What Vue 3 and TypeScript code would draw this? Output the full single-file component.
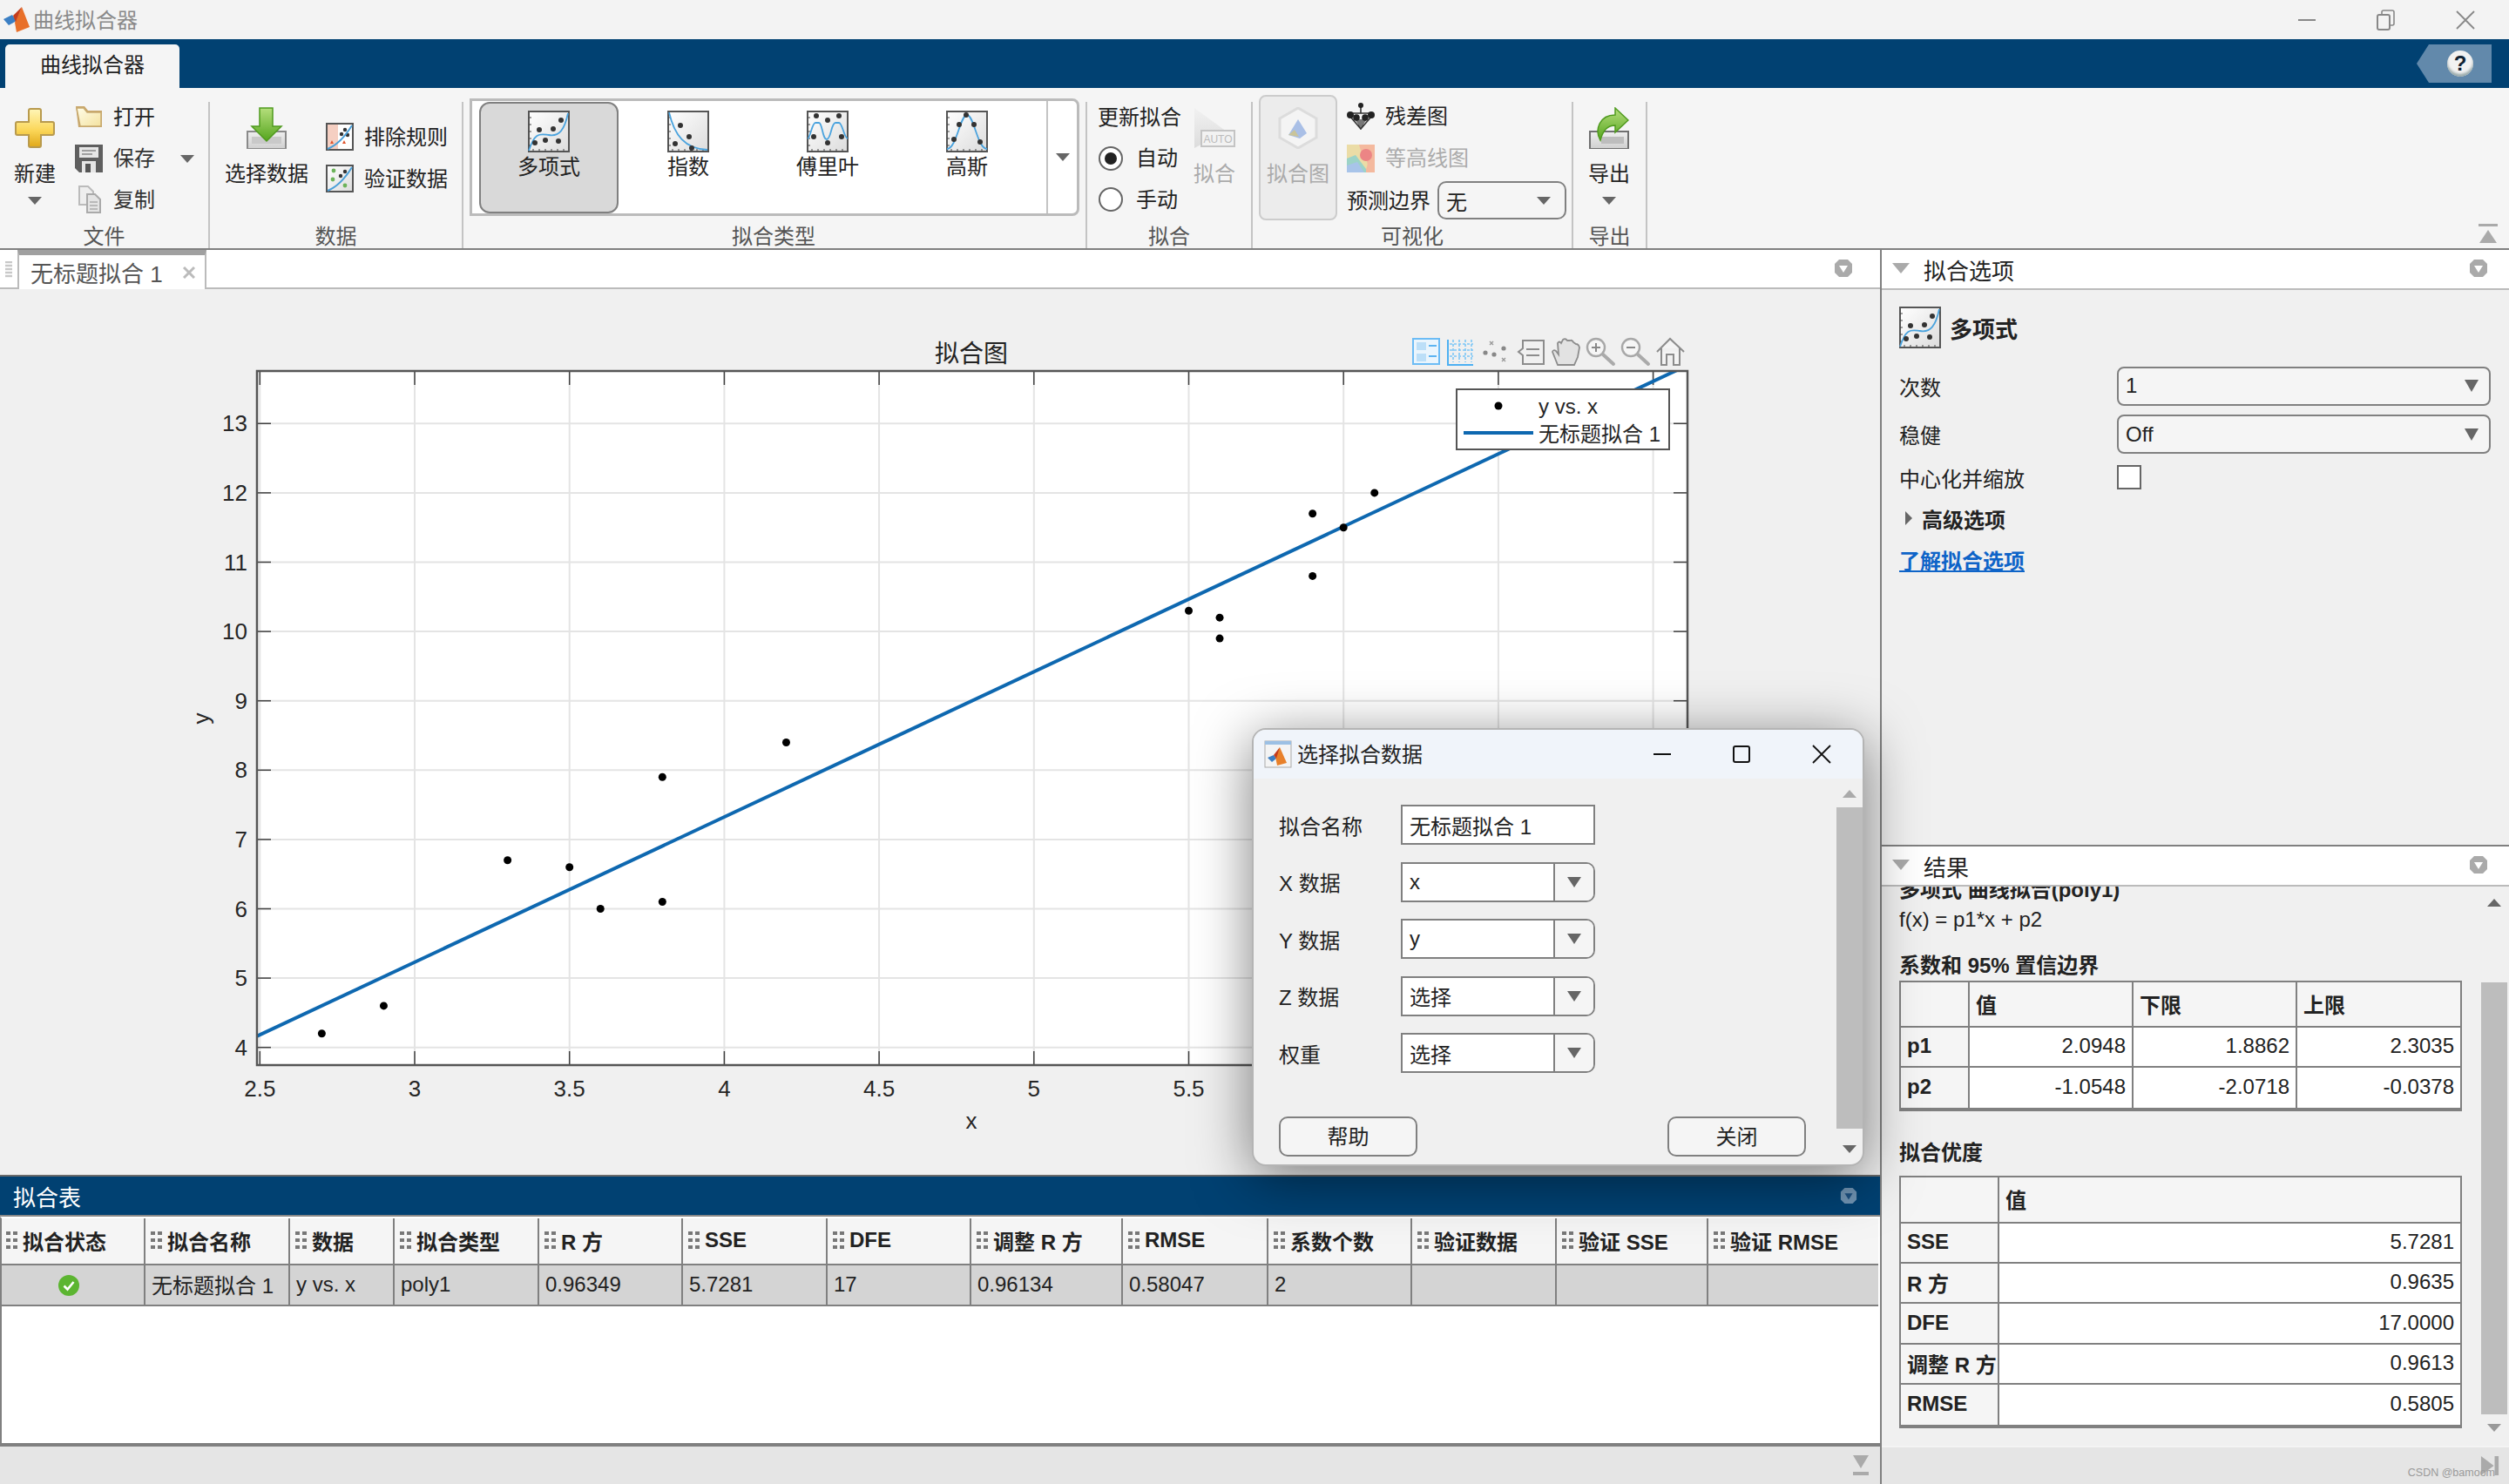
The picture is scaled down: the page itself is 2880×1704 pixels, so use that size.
<script setup lang="ts">
const X = (v: number) => 298.3 + (v - 2.5) * 355.4
const Y = (v: number) => 1202.7 - (v - 4) * 79.6

const xTicks = [2.5, 3, 3.5, 4, 4.5, 5, 5.5, 6, 6.5, 7]
const yTicks = [4, 5, 6, 7, 8, 9, 10, 11, 12, 13]
const points = [
  [2.7, 4.2], [2.9, 4.6], [3.3, 6.7], [3.5, 6.6], [3.6, 6.0], [3.8, 7.9], [3.8, 6.1], [4.2, 8.4],
  [5.5, 10.3], [5.6, 10.2], [5.6, 9.9], [5.9, 11.7], [5.9, 10.8], [6.0, 11.5], [6.1, 12.0]
]
const fit = (x: number) => 2.0948 * x - 1.0548

type Dot = [number, number]
const gallery: { label: string; curve: string; dots: Dot[] }[] = [
  { label: '多项式', curve: 'M1,46 C8,24 14,27 24,28 C36,30 42,22 46,3', dots: [[38, 11], [29, 21], [13, 22], [35, 35], [20, 34], [8, 37]] },
  { label: '指数', curve: 'M2,2 C8,28 20,44 46,45', dots: [[15, 17], [25, 30], [9, 38], [28, 43]] },
  { label: '傅里叶', curve: 'M1,32 C4,32 6,14 10,14 L14,14 C18,14 18,33 23,33 C28,33 28,14 33,14 L37,14 C41,14 43,32 47,32', dots: [[11, 6], [24, 11], [37, 6], [8, 30], [24, 37], [40, 30]] },
  { label: '高斯', curve: 'M1,44 C12,44 16,5 24,5 C32,5 36,44 47,44', dots: [[23, 5], [15, 16], [32, 16], [9, 33], [39, 36]] }
]

const columns = ['拟合状态', '拟合名称', '数据', '拟合类型', 'R 方', 'SSE', 'DFE', '调整 R 方', 'RMSE', '系数个数', '验证数据', '验证 SSE', '验证 RMSE']
const rowValues = ['', '无标题拟合 1', 'y vs. x', 'poly1', '0.96349', '5.7281', '17', '0.96134', '0.58047', '2', '', '', '']
const gripDots: Dot[] = [[0, 0], [8, 0], [0, 8], [8, 8], [0, 16], [8, 16]]

const coef = [
  { n: 'p1', v: ['2.0948', '1.8862', '2.3035'] },
  { n: 'p2', v: ['-1.0548', '-2.0718', '-0.0378'] }
]
const gof = [
  ['SSE', '5.7281'], ['R 方', '0.9635'], ['DFE', '17.0000'], ['调整 R 方', '0.9613'], ['RMSE', '0.5805']
]
const dlgRows = [
  ['X 数据', 'x'], ['Y 数据', 'y'], ['Z 数据', '选择'], ['权重', '选择']
]
</script>

<template>
  <div class="app">
    <svg class="defs" width="0" height="0">
      <defs>
        <linearGradient id="gIcon" x1="0" y1="0" x2="1" y2="1"><stop offset="0" stop-color="#ffffff" /><stop offset="1" stop-color="#dcdcdc" /></linearGradient>
        <linearGradient id="gPlus" x1="0" y1="0" x2="0" y2="1"><stop offset="0" stop-color="#fff6b8" /><stop offset=".55" stop-color="#fbd75a" /><stop offset="1" stop-color="#e0a818" /></linearGradient>
        <linearGradient id="gFolder" x1="0" y1="0" x2="1" y2="1"><stop offset="0" stop-color="#fffde8" /><stop offset="1" stop-color="#f4e2a0" /></linearGradient>
        <linearGradient id="gGreen" x1="0" y1="0" x2="0" y2="1"><stop offset="0" stop-color="#b5de7c" /><stop offset="1" stop-color="#55a51e" /></linearGradient>
        <linearGradient id="gTray" x1="0" y1="0" x2="0" y2="1"><stop offset="0" stop-color="#efefef" /><stop offset="1" stop-color="#cfcfcf" /></linearGradient>
        <linearGradient id="gBtn" x1="0" y1="0" x2="0" y2="1"><stop offset="0" stop-color="#f0f0f0" /><stop offset="1" stop-color="#d6d6d6" /></linearGradient>
      </defs>
    </svg>

    <header class="titlebar">
      <svg class="logo" width="32" height="32" viewBox="0 0 32 32">
        <polygon points="2,15 12,10 17,17 8,22" fill="#3b7fc4" />
        <polygon points="23,1 32,24 17,30 15,19" fill="#e8702a" />
        <polygon points="23,1 13,11 16,18" fill="#c43c1c" />
      </svg>
      <span class="apptitle">曲线拟合器</span>
      <div class="winctl">
        <svg width="22" height="22" viewBox="0 0 22 22"><path d="M1,11 H21" stroke="#888" stroke-width="2" /></svg>
        <svg width="22" height="24" viewBox="0 0 22 24"><rect x="1" y="6" width="14" height="17" rx="2" fill="none" stroke="#888" stroke-width="2" /><path d="M6,6 V3 Q6,1 8,1 H18 Q20,1 20,3 V16 Q20,18 18,18 H15" fill="none" stroke="#888" stroke-width="1.6" /></svg>
        <svg width="22" height="22" viewBox="0 0 22 22"><path d="M1,1 L21,21 M21,1 L1,21" stroke="#888" stroke-width="1.8" /></svg>
      </div>
    </header>

    <div class="tabstrip">
      <div class="maintab">曲线拟合器</div>
      <div class="helptag">
        <span class="helpball">?</span>
      </div>
    </div>

    <div class="ribbon">
      <section class="group g-file">
        <div class="gbody">
          <div class="lg w80">
            <svg class="lgicon plusicon" width="46" height="48" viewBox="0 0 46 48">
              <path d="M16,3 Q16,1 18,1 H28 Q30,1 30,3 V16 H43 Q45,16 45,18 V29 Q45,31 43,31 H30 V43 Q30,45 28,45 H18 Q16,45 16,43 V31 H3 Q1,31 1,29 V18 Q1,16 3,16 H16 Z" fill="url(#gPlus)" stroke="#b89a4e" stroke-width="2" />
            </svg>
            <span class="lglabel">新建</span>
            <i class="tri lgtri"></i>
          </div>
          <div class="smalls ml6 w118">
            <div class="small">
              <svg width="32" height="28" viewBox="0 0 32 28"><path d="M1,2 H11 L15,7 H31 V26 H4 Z" fill="#c9a66a" /><path d="M2,4 H10 L14,9 H30 V25 H6 Z" fill="url(#gFolder)" stroke="#c8aa70" stroke-width="1.5" /></svg>
              <span>打开</span>
            </div>
            <div class="small">
              <svg width="32" height="32" viewBox="0 0 32 32"><path d="M0,0 H32 V32 H5 L0,27 Z" fill="#5f5f5f" /><rect x="5" y="3" width="22" height="12" fill="#e6e6e6" /><path d="M8,7 H24 M8,11 H20" stroke="#888" stroke-width="1.5" /><rect x="8" y="19" width="16" height="13" fill="#e6e6e6" /><rect x="12" y="22" width="6" height="10" fill="#555" /></svg>
              <span class="midgray">保存</span>
            </div>
            <div class="small">
              <svg width="32" height="32" viewBox="0 0 32 32"><path d="M5,1 H15 L21,7 V22 H5 Z" fill="#eee" stroke="#bbb" stroke-width="2" /><path d="M14,10 H23 L29,16 V31 H14 Z" fill="#e4e4e4" stroke="#aaa" stroke-width="2" /><path d="M17,19 H26 M17,23 H26 M17,27 H26" stroke="#aaa" stroke-width="1.5" /></svg>
              <span class="midgray">复制</span>
            </div>
          </div>
          <i class="tri filetri"></i>
        </div>
        <div class="glabel">文件</div>
      </section>

      <section class="group g-data">
        <div class="gbody">
          <div class="lg w96">
            <svg class="lgicon" width="46" height="48" viewBox="0 0 46 48">
              <rect x="1" y="28" width="44" height="20" fill="url(#gTray)" stroke="#8a8a8a" stroke-width="2" />
              <rect x="6" y="34" width="34" height="8" fill="#c9c9c9" />
              <path d="M15,1 H30 V22 H40 L23,39 L6,22 H15 Z" fill="url(#gGreen)" stroke="#4f9a1e" stroke-width="1.5" />
            </svg>
            <span class="lglabel">选择数据</span>
          </div>
          <div class="smalls ml20 pt24">
            <div class="small">
              <svg width="32" height="32" viewBox="0 0 32 32"><rect x="1" y="1" width="30" height="30" fill="#f5cfc2" stroke="#555" stroke-width="2" /><rect x="14" y="2" width="16" height="28" fill="#fff" /><circle cx="22" cy="8" r="2.2" fill="#333" /><circle cx="18" cy="13" r="2.2" fill="#333" /><circle cx="25" cy="14" r="2.2" fill="#333" /><path d="M7,20 l2,4 -4,0 z M21,20 l2,4 -4,0 z" fill="#e0532c" /><path d="M2,30 C12,26 22,16 30,3" stroke="#4a9fd8" stroke-width="2" fill="none" /></svg>
              <span>排除规则</span>
            </div>
            <div class="small">
              <svg width="32" height="32" viewBox="0 0 32 32"><rect x="1" y="1" width="30" height="30" fill="url(#gIcon)" stroke="#555" stroke-width="2" /><circle cx="9" cy="7" r="2.4" fill="#6cb35a" /><circle cx="22" cy="8" r="2.2" fill="#333" /><circle cx="17" cy="13" r="2.2" fill="#333" /><circle cx="8" cy="17" r="2.4" fill="#6cb35a" /><circle cx="22" cy="24" r="2.4" fill="#6cb35a" /><path d="M2,30 C12,26 22,16 30,3" stroke="#4a9fd8" stroke-width="2" fill="none" /></svg>
              <span>验证数据</span>
            </div>
          </div>
        </div>
        <div class="glabel">数据</div>
      </section>

      <section class="group g-type">
        <div class="gbody">
          <div class="gallery">
            <div v-for="(g, i) in gallery" :key="g.label" class="gitem" :class="{ selected: i === 0 }">
              <svg width="48" height="48" viewBox="0 0 48 48">
                <rect x="1" y="1" width="46" height="46" fill="url(#gIcon)" stroke="#555" stroke-width="2" />
                <path d="M6,47 v-3 M13,47 v-3 M20,47 v-3 M27,47 v-3 M34,47 v-3 M41,47 v-3 M1,8 h3 M1,16 h3 M1,24 h3 M1,32 h3 M1,40 h3" stroke="#444" stroke-width="1" />
                <path :d="g.curve" fill="none" stroke="#4aa3de" stroke-width="1.8" />
                <circle v-for="(d, k) in g.dots" :key="k" :cx="d[0]" :cy="d[1]" r="3" fill="#333" />
              </svg>
              <span>{{ g.label }}</span>
            </div>
            <div class="gmore"><i class="tri"></i></div>
          </div>
        </div>
        <div class="glabel">拟合类型</div>
      </section>

      <section class="group g-fit">
        <div class="gbody">
          <div class="smalls ml12 w96">
            <div class="small plain"><span>更新拟合</span></div>
            <label class="small radio"><i class="rb on"></i><span>自动</span></label>
            <label class="small radio"><i class="rb"></i><span>手动</span></label>
          </div>
          <div class="lg w48 disabled ml14">
            <svg class="lgicon" width="48" height="48" viewBox="0 0 48 48">
              <path d="M1,1 L38,28 L1,47 Z" fill="url(#gBtn)" opacity=".8" />
              <rect x="9" y="27" width="38" height="18" fill="#f2f2f2" stroke="#c4c4c4" stroke-width="2" />
              <text x="28" y="41" text-anchor="middle" class="auto">AUTO</text>
            </svg>
            <span class="lglabel">拟合</span>
          </div>
        </div>
        <div class="glabel">拟合</div>
      </section>

      <section class="group g-viz">
        <div class="gbody">
          <div class="vizbtn">
            <svg width="48" height="48" viewBox="0 0 48 48">
              <path d="M24,1 L45,13 V35 L24,47 L3,35 V13 Z" fill="#f4f4f4" stroke="#dcdcdc" stroke-width="3" />
              <path d="M13,32 L24,14 L34,30 L26,36 Z" fill="#a9bfe6" />
              <path d="M13,32 L20,26 L25,34 Z" fill="#c9c49a" />
            </svg>
            <span>拟合图</span>
          </div>
          <div class="smalls ml11">
            <div class="small">
              <svg width="32" height="32" viewBox="0 0 32 32">
                <path d="M16,3 V13 M5,13 H27 M4,17 L16,31 L28,17 M11,19 L16,31 L21,19" stroke="#333" stroke-width="1.6" fill="none" />
                <path d="M9,20 L16,30 L23,20 Z" fill="#777" />
                <circle cx="16" cy="4" r="3" fill="#222" /><circle cx="4" cy="15" r="4" fill="#222" /><circle cx="28" cy="15" r="4" fill="#222" /><circle cx="11" cy="18" r="3.8" fill="#222" /><circle cx="21" cy="18" r="3.8" fill="#222" />
              </svg>
              <span>残差图</span>
            </div>
            <div class="small dis">
              <svg width="32" height="32" viewBox="0 0 32 32" opacity=".75">
                <rect width="32" height="32" fill="#e8d48c" /><path d="M14,0 H32 V32 H20 Q28,20 18,14 Z" fill="#f4a582" /><circle cx="22" cy="12" r="7" fill="#ea6060" /><path d="M0,32 V16 L10,12 L22,28 V32 Z" fill="#7fc8b8" /><path d="M0,32 V24 L12,20 L20,32 Z" fill="#8fb4e6" />
              </svg>
              <span>等高线图</span>
            </div>
            <div class="small bounds">
              <span>预测边界</span>
              <div class="rsel"><span>无</span><i class="tri"></i></div>
            </div>
          </div>
        </div>
        <div class="glabel">可视化</div>
      </section>

      <section class="group g-exp">
        <div class="gbody">
          <div class="lg w82">
            <svg class="lgicon" width="46" height="48" viewBox="0 0 46 48">
              <rect x="1" y="28" width="44" height="20" fill="url(#gTray)" stroke="#707070" stroke-width="2" />
              <rect x="14" y="34" width="26" height="8" fill="#bdbdbd" />
              <path d="M30,1 L45,15 L30,29 V21 C22,21 16,26 13,38 C6,26 12,9 30,9 Z" fill="url(#gGreen)" stroke="#4f9a1e" stroke-width="1.5" />
            </svg>
            <span class="lglabel">导出</span>
            <i class="tri lgtri"></i>
          </div>
        </div>
        <div class="glabel">导出</div>
      </section>

      <svg class="collapse" width="22" height="22" viewBox="0 0 22 22"><rect x="0" y="0" width="22" height="3" fill="#aaa" /><path d="M11,7 L21,22 H1 Z" fill="#aaa" /></svg>
    </div>

    <div class="main">
      <section class="left">
        <div class="doctabs">
          <div class="docgrip"></div>
          <div class="doctab">
            <span>无标题拟合 1</span>
            <svg width="14" height="14" viewBox="0 0 14 14"><path d="M1,1 L13,13 M13,1 L1,13" stroke="#bbb" stroke-width="3" /></svg>
          </div>
          <div class="docrest">
            <svg class="dock" width="22" height="22" viewBox="0 0 22 22"><path d="M6,1 H16 L21,6 V16 L16,21 H6 L1,16 V6 Z" fill="#aaa" /><path d="M6,8 H16 L11,16 Z" fill="#fff" /></svg>
          </div>
        </div>

        <div class="plot">
          <svg width="2158" height="1017" viewBox="0 332 2158 1017" class="plotsvg">
            <defs><clipPath id="axclip"><rect x="295" y="426" width="1642" height="797" /></clipPath></defs>
            <text x="1115" y="416" text-anchor="middle" class="ptitle">拟合图</text>
            <rect x="295" y="426" width="1642" height="797" fill="#fff" />
            <g stroke="#e4e4e4" stroke-width="2">
              <line v-for="v in xTicks" :key="'gx' + v" :x1="X(v)" :x2="X(v)" y1="426" y2="1223" />
              <line v-for="v in yTicks" :key="'gy' + v" x1="295" x2="1937" :y1="Y(v)" :y2="Y(v)" />
            </g>
            <g stroke="#404040" stroke-width="1.5">
              <template v-for="v in xTicks" :key="'tx' + v">
                <line :x1="X(v)" :x2="X(v)" y1="426" y2="442" />
                <line :x1="X(v)" :x2="X(v)" y1="1207" y2="1223" />
              </template>
              <template v-for="v in yTicks" :key="'ty' + v">
                <line x1="295" x2="311" :y1="Y(v)" :y2="Y(v)" />
                <line x1="1921" x2="1937" :y1="Y(v)" :y2="Y(v)" />
              </template>
            </g>
            <g clip-path="url(#axclip)">
              <line :x1="X(2.4)" :y1="Y(fit(2.4))" :x2="X(7.2)" :y2="Y(fit(7.2))" stroke="#0e68b0" stroke-width="4" />
              <circle v-for="(p, i) in points" :key="i" :cx="X(p[0])" :cy="Y(p[1])" r="4.5" fill="#000" />
            </g>
            <rect x="295" y="426" width="1642" height="797" fill="none" stroke="#555" stroke-width="2.5" />
            <text v-for="v in xTicks" :key="'lx' + v" :x="X(v)" y="1259" text-anchor="middle" class="tick">{{ v }}</text>
            <text v-for="v in yTicks" :key="'ly' + v" x="284" :y="Y(v) + 9" text-anchor="end" class="tick">{{ v }}</text>
            <text x="1115" y="1296" text-anchor="middle" class="tick">x</text>
            <text x="0" y="0" text-anchor="middle" class="tick" transform="translate(240,825) rotate(-90)">y</text>

            <rect x="1672" y="447" width="244" height="69" fill="#fff" stroke="#555" stroke-width="2" />
            <circle cx="1720" cy="466" r="4.5" fill="#000" />
            <text x="1766" y="475" class="leg">y vs. x</text>
            <line x1="1680" x2="1760" y1="497" y2="497" stroke="#0e68b0" stroke-width="4" />
            <text x="1766" y="507" class="leg">无标题拟合 1</text>

            <!-- axes toolbar -->
            <g fill="none">
              <rect x="1622" y="389" width="30" height="29" stroke="#6cbcf5" stroke-width="2" fill="#eaf5fd" />
              <rect x="1626" y="393" width="11" height="9" fill="#bcdff8" /><rect x="1626" y="406" width="11" height="9" fill="#bcdff8" />
              <path d="M1640,397 H1649 M1640,409 H1649" stroke="#5cb4f2" stroke-width="2" />
              <path d="M1662,390 V419 H1691" stroke="#4db0f2" stroke-width="2" />
              <path d="M1668,390 V416 M1675,390 V416 M1682,390 V416 M1689,390 V416 M1664,395 H1691 M1664,402 H1691 M1664,409 H1691" stroke="#7cc6f6" stroke-width="1.6" stroke-dasharray="3 2" />
              <g fill="#888"><circle cx="1705" cy="405" r="2.6" /><circle cx="1715" cy="407" r="2.6" /><circle cx="1726" cy="400" r="2.6" /></g>
              <path d="M1710,392 l4,4 m0,-4 l-4,4 M1724,411 l4,4 m0,-4 l-4,4" stroke="#999" stroke-width="1.4" />
              <path d="M1748,391 H1772 V418 H1748 V408 L1743,404 L1748,400 Z" stroke="#8c8c8c" stroke-width="2" fill="#f0f0f0" />
              <path d="M1752,401 H1767 M1752,408 H1767" stroke="#8c8c8c" stroke-width="2" />
              <path d="M1788,419 L1782,404 Q1783,401 1786,403 L1789,407 L1788,394 Q1790,391 1792,394 L1794,390 Q1797,388 1799,391 L1802,391 Q1805,390 1806,393 L1809,395 Q1812,395 1813,399 L1811,410 L1807,419 Z" stroke="#8c8c8c" stroke-width="1.8" fill="#e2e2e2" />
              <circle cx="1832" cy="399" r="10" stroke="#a8a8a8" stroke-width="2.4" fill="#f6f6f6" />
              <path d="M1827,399 H1837 M1832,394 V404" stroke="#888" stroke-width="2" />
              <path d="M1840,407 L1852,418" stroke="#aaa" stroke-width="4" stroke-linecap="round" />
              <circle cx="1872" cy="399" r="10" stroke="#a8a8a8" stroke-width="2.4" fill="#f6f6f6" />
              <path d="M1867,399 H1877" stroke="#888" stroke-width="2" />
              <path d="M1880,407 L1892,418" stroke="#aaa" stroke-width="4" stroke-linecap="round" />
              <path d="M1902,404 L1917,389 L1933,404 M1907,400 V419 H1913 V407 H1921 V419 H1928 V400" stroke="#8c8c8c" stroke-width="2" fill="#f4f4f4" />
            </g>
          </svg>
        </div>

        <div class="fitbar">
          <span>拟合表</span>
          <svg width="20" height="22" viewBox="0 0 22 22"><path d="M6,1 H16 L21,6 V16 L16,21 H6 L1,16 V6 Z" fill="#6f93b2" /><path d="M6,8 H16 L11,16 Z" fill="#1c5080" /></svg>
        </div>
        <div class="fittable">
          <div class="ftgrid">
            <div v-for="c in columns" :key="c" class="fth">
              <svg class="grip" width="14" height="20" viewBox="0 0 14 20"><rect v-for="(d, i) in gripDots" :key="i" :x="d[0]" :y="d[1]" width="5" height="4" fill="#777" /></svg>
              <span>{{ c }}</span>
            </div>
            <div v-for="(v, i) in rowValues" :key="i" class="ftd" :class="{ status: i === 0 }">
              <svg v-if="i === 0" width="24" height="24" viewBox="0 0 24 24"><circle cx="12" cy="12" r="12" fill="#5cb531" /><path d="M6.5,12.5 L10.5,16.5 L17.5,8" fill="none" stroke="#fff" stroke-width="2.6" /></svg>
              <span v-else>{{ v }}</span>
            </div>
          </div>
        </div>
        <div class="leftfoot">
          <svg width="20" height="24" viewBox="0 0 20 24"><path d="M1,0 H19 L10,15 Z M1,19 H19 V23 H1 Z" fill="#aaa" /></svg>
        </div>
      </section>

      <section class="right">
        <div class="opts">
          <div class="phead">
            <i class="ptri"></i><span class="ptext">拟合选项</span>
            <svg class="dock" width="22" height="22" viewBox="0 0 22 22"><path d="M6,1 H16 L21,6 V16 L16,21 H6 L1,16 V6 Z" fill="#aaa" /><path d="M6,8 H16 L11,16 Z" fill="#fff" /></svg>
          </div>
          <div class="optbody">
            <div class="opttitle">
              <svg width="48" height="48" viewBox="0 0 48 48">
                <rect x="1" y="1" width="46" height="46" fill="url(#gIcon)" stroke="#555" stroke-width="2" />
                <path d="M6,47 v-3 M13,47 v-3 M20,47 v-3 M27,47 v-3 M34,47 v-3 M41,47 v-3 M1,8 h3 M1,16 h3 M1,24 h3 M1,32 h3 M1,40 h3" stroke="#444" stroke-width="1" />
                <path d="M1,46 C8,24 14,27 24,28 C36,30 42,22 46,3" fill="none" stroke="#4aa3de" stroke-width="1.8" />
                <circle v-for="(d, k) in gallery[0].dots" :key="k" :cx="d[0]" :cy="d[1]" r="3" fill="#333" />
              </svg>
              <b>多项式</b>
            </div>
            <div class="optgrid">
              <span>次数</span>
              <div class="psel"><span>1</span><i class="tri"></i></div>
              <span>稳健</span>
              <div class="psel"><span>Off</span><i class="tri"></i></div>
              <span>中心化并缩放</span>
              <i class="chk"></i>
            </div>
            <div class="adv"><i class="rtri"></i><b>高级选项</b></div>
            <a class="learn">了解拟合选项</a>
          </div>
        </div>

        <div class="results">
          <div class="phead">
            <i class="ptri"></i><span class="ptext">结果</span>
            <svg class="dock" width="22" height="22" viewBox="0 0 22 22"><path d="M6,1 H16 L21,6 V16 L16,21 H6 L1,16 V6 Z" fill="#aaa" /><path d="M6,8 H16 L11,16 Z" fill="#fff" /></svg>
          </div>
          <div class="resbody">
            <div class="rescontent">
              <h4 class="clip">多项式 曲线拟合(poly1)</h4>
              <p class="formula">f(x) = p1*x + p2</p>
              <h4 class="h2">系数和 95% 置信边界</h4>
              <div class="rt coef">
                <div class="rc hd"></div><div class="rc hd">值</div><div class="rc hd">下限</div><div class="rc hd last">上限</div>
                <template v-for="r in coef" :key="r.n">
                  <div class="rc hd">{{ r.n }}</div>
                  <div v-for="(v, i) in r.v" :key="i" class="rc val" :class="{ last: i === 2 }">{{ v }}</div>
                </template>
              </div>
              <h4 class="h3">拟合优度</h4>
              <div class="rt gof">
                <div class="rc hd"></div><div class="rc hd last">值</div>
                <template v-for="r in gof" :key="r[0]">
                  <div class="rc hd">{{ r[0] }}</div>
                  <div class="rc val last">{{ r[1] }}</div>
                </template>
              </div>
            </div>
            <div class="resscroll">
              <i class="up"></i>
              <div class="thumb"></div>
              <i class="down"></i>
            </div>
          </div>
          <div class="resfoot">
            <svg width="22" height="22" viewBox="0 0 22 24"><path d="M0,0 L16,12 L0,24 Z" fill="#aaa" /><rect x="17" y="0" width="5" height="24" fill="#aaa" /></svg>
            <span class="wm">CSDN @bamoom</span>
          </div>
        </div>
      </section>
    </div>

    <div class="dialog">
      <div class="dlgtitle">
        <svg width="32" height="32" viewBox="0 0 32 32">
          <rect x="1" y="1" width="30" height="30" fill="#f4f4f4" stroke="#aaa" />
          <rect x="1" y="1" width="30" height="4" fill="#9cc0e4" />
          <polygon points="4,20 11,17 14,21 9,25" fill="#3b7fc4" />
          <polygon points="18,8 26,26 15,29 13,19" fill="#e8802a" />
          <polygon points="18,8 11,17 14,21" fill="#c43c1c" />
        </svg>
        <span>选择拟合数据</span>
        <div class="dlgctl">
          <svg width="20" height="20" viewBox="0 0 20 20"><path d="M0,10 H20" stroke="#111" stroke-width="2" /></svg>
          <svg width="20" height="20" viewBox="0 0 20 20"><rect x="1" y="1" width="18" height="18" rx="2" fill="none" stroke="#111" stroke-width="2" /></svg>
          <svg width="22" height="22" viewBox="0 0 22 22"><path d="M1,1 L21,21 M21,1 L1,21" stroke="#111" stroke-width="1.8" /></svg>
        </div>
      </div>
      <div class="dlgbody">
        <div class="dlgform">
          <div class="dlggrid">
            <span>拟合名称</span>
            <div class="dinput">无标题拟合 1</div>
            <template v-for="r in dlgRows" :key="r[0]">
              <span>{{ r[0] }}</span>
              <div class="dsel"><span>{{ r[1] }}</span><div class="dbtn"><i class="tri big"></i></div></div>
            </template>
          </div>
          <div class="dlgbtns">
            <button class="dbutton">帮助</button>
            <button class="dbutton">关闭</button>
          </div>
        </div>
        <div class="dlgscroll">
          <i class="up"></i>
          <div class="thumb"></div>
          <i class="down"></i>
        </div>
      </div>
    </div>
  </div>
</template>

<style>
html, body { margin: 0; padding: 0; background: #f0f0f0; }
</style>

<style scoped>
.app {
  position: relative;
  width: 2880px;
  height: 1704px;
  overflow: hidden;
  display: flex;
  flex-direction: column;
  font-family: "Liberation Sans", "Noto Sans CJK SC", sans-serif;
  font-size: 24px;
  color: #222;
  background: #f0f0f0;
}
.defs { position: absolute; }
span, div, b, h4, p, a, button { box-sizing: border-box; }

.titlebar { height: 45px; flex: none; display: flex; align-items: center; background: #f3f3f3; padding-left: 2px; }
.logo { flex: none; }
.apptitle { margin-left: 4px; color: #8a8a8a; padding-bottom: 3px; }
.winctl { margin-left: auto; display: flex; align-items: center; gap: 69px; margin-right: 39px; }

.tabstrip { height: 56px; flex: none; background: #014172; display: flex; position: relative; padding-left: 6px; }
.maintab { margin-top: 6px; width: 200px; height: 50px; background: #f5f5f5; border-radius: 5px 5px 0 0; display: flex; align-items: center; justify-content: center; color: #222; padding-bottom: 8px; }
.helptag { margin: 6px 20px 0 auto; width: 86px; height: 44px; background: #6289ab; clip-path: polygon(14px 0, 100% 0, 100% 100%, 14px 100%, 0 50%); display: flex; align-items: center; justify-content: center; padding-left: 14px; }
.helpball { width: 30px; height: 30px; border-radius: 50%; background: #f2f2f2; color: #123; font-weight: 700; font-size: 24px; display: flex; align-items: center; justify-content: center; box-shadow: inset 0 -3px 3px #9aa; }

.ribbon { height: 186px; flex: none; background: #f5f5f5; border-bottom: 2px solid #808080; display: flex; padding-top: 16px; box-sizing: border-box; position: relative; }
.group { display: flex; flex-direction: column; border-right: 2px solid #c4c4c4; box-sizing: border-box; flex: none; }
.g-file { width: 241px; }
.g-data { width: 291px; padding-left: 17px; }
.g-type { width: 716px; }
.g-fit { width: 190px; }
.g-viz { width: 368px; }
.g-exp { width: 85px; }
.gbody { height: 136px; display: flex; flex: none; }
.glabel { height: 32px; line-height: 38px; text-align: center; color: #555; }
.g-data .glabel { margin-left: -17px; width: 289px; }
.g-type .glabel { padding-right: 2px; }

.lg { display: flex; flex-direction: column; align-items: center; padding-top: 6px; flex: none; }
.lgicon { height: 48px; flex: none; }
.plusicon { margin-top: 1px; margin-bottom: -1px; }
.lglabel { margin-top: 12px; height: 34px; line-height: 34px; white-space: nowrap; color: #222; }
.lgtri { margin-top: 9px; }
.w80 { width: 80px; }
.w82 { width: 82px; }
.w96 { width: 96px; }
.w48 { width: 48px; }
.w118 { width: 118px; }
.ml6 { margin-left: 6px; }
.ml11 { margin-left: 11px; margin-top: -1px; gap: 14.5px !important; }
.ml12 { margin-left: 12px; }
.ml14 { margin-left: 14px; }
.ml20 { margin-left: 20px; }
.pt24 { padding-top: 23px; gap: 14px !important; }
.disabled .lglabel { color: #ababab; }

.tri { display: block; width: 0; height: 0; flex: none; border-left: 8px solid transparent; border-right: 8px solid transparent; border-top: 9px solid #666; }
.tri.big { border-top-width: 12px; }
.filetri { align-self: flex-start; margin: 61px 0 0 3px; }

.smalls { display: flex; flex-direction: column; gap: 13.5px; flex: none; }
.small { height: 34px; display: flex; align-items: center; gap: 12px; white-space: nowrap; }
.small > span { padding-bottom: 4px; }
.small svg { flex: none; }
.small.plain { gap: 0; }
.midgray { color: #333; }
.radio { gap: 15px; }
.rb { width: 28px; height: 28px; border-radius: 50%; border: 2px solid #666; background: #fff; box-sizing: border-box; display: flex; align-items: center; justify-content: center; flex: none; margin-left: 1px; }
.rb.on::after { content: ""; width: 14px; height: 14px; border-radius: 50%; background: #222; }
.dis span { color: #ababab; }

.gallery { margin: -4px 0 0 7px; width: 700px; height: 135px; background: #fff; border: 3px solid #bbb; border-radius: 0 8px 8px 0; display: flex; padding: 1px 0 0 8px; box-sizing: border-box; }
.gitem { width: 160px; height: 128px; flex: none; display: flex; flex-direction: column; align-items: center; padding-top: 10px; box-sizing: border-box; color: #222; }
.gitem span { margin-top: 0; height: 34px; line-height: 34px; }
.gitem.selected { background: #d9d9d9; border: 2px solid #808080; border-radius: 12px; padding-top: 8px; }
.gmore { margin-left: 11px; margin-top: -1px; height: 129px; flex: 1; border-left: 2px solid #c4c4c4; display: flex; align-items: center; justify-content: center; }

.vizbtn { margin: -8px 0 0 7px; width: 90px; height: 144px; flex: none; background: #ececec; border: 2px solid #ccc; border-radius: 8px; display: flex; flex-direction: column; align-items: center; padding-top: 12px; color: #ababab; }
.vizbtn span { margin-top: 12px; height: 34px; line-height: 34px; white-space: nowrap; }
.bounds { gap: 8px; }
.rsel { width: 148px; height: 44px; border: 2px solid #808080; border-radius: 10px; display: flex; align-items: center; justify-content: space-between; padding: 0 16px 0 8px; background: #f5f5f5; }

.collapse { position: absolute; right: 13px; bottom: 6px; }

.main { flex: 1; display: flex; min-height: 0; }
.left { width: 2160px; flex: none; display: flex; flex-direction: column; border-right: 2px solid #808080; box-sizing: border-box; }
.right { flex: 1; display: flex; flex-direction: column; min-width: 0; }

.doctabs { height: 45px; flex: none; display: flex; background: #fff; }
.docgrip { width: 20px; flex: none; border-bottom: 2px solid #bbb; position: relative; }
.docgrip::after { content: ""; position: absolute; left: 6px; top: 13px; width: 8px; height: 19px; background: repeating-linear-gradient(#c8c8c8 0 2px, #f4f4f4 2px 4px); }
.doctab { width: 217px; flex: none; border-top: 6px solid #a0a0a0; border-left: 2px solid #bbb; border-right: 2px solid #bbb; display: flex; align-items: center; padding-left: 13px; gap: 23px; color: #555; background: #fff; }
.doctab span { font-size: 26px; white-space: nowrap; }
.doctab svg { flex: none; }
.docrest { flex: 1; border-bottom: 2px solid #bbb; display: flex; justify-content: flex-end; padding: 10px 31px 0 0; box-sizing: border-box; }
.dock { flex: none; }

.plot { height: 1017px; flex: none; background: #f0f0f0; }
.plotsvg { display: block; }
.ptitle { font-size: 28px; fill: #222; }
.tick { font-size: 26px; fill: #262626; }
.leg { font-size: 24px; fill: #262626; }
.auto { font-size: 12px; fill: #bbb; }

.fitbar { height: 48px; flex: none; background: #014172; border-top: 2px solid #6a6a6a; border-bottom: 2px solid #888; color: #fff; display: flex; align-items: center; justify-content: space-between; padding: 0 26px 0 15px; font-size: 26px; }
.fittable { height: 264px; flex: none; background: #fff; border-top: 2px solid #fff; border-left: 2px solid #808080; border-bottom: 4px solid #808080; box-sizing: border-box; }
.ftgrid { display: grid; grid-template-columns: 165px 166px 120px 166px 165px 166px 165px 174px 167px 165px 166px 174px 195px; grid-template-rows: 54px 47px; }
.fth { background: #f5f5f5; border-right: 2px solid #808080; border-bottom: 2px solid #808080; display: flex; align-items: center; padding: 0 0 2px 6px; gap: 5px; font-weight: 700; white-space: nowrap; color: #222; }
.fth:first-child { padding-left: 5px; }
.fth:nth-child(13) { border-right: none; }
.grip { flex: none; }
.ftd { background: #d4d4d4; border-right: 2px solid #808080; border-bottom: 2px solid #808080; display: flex; align-items: center; padding: 0 0 2px 7px; white-space: nowrap; color: #222; }
.ftd:nth-child(26) { border-right: none; }
.ftd.status { justify-content: center; padding: 0 10px 0 0; }
.leftfoot { flex: 1; background: #e5e5e5; display: flex; justify-content: flex-end; align-items: center; padding-right: 12px; }

.opts { height: 683px; flex: none; display: flex; flex-direction: column; background: #f0f0f0; }
.results { flex: 1; display: flex; flex-direction: column; min-height: 0; border-top: 2px solid #808080; box-sizing: border-box; }
.phead { height: 46px; flex: none; background: #fff; border-bottom: 2px solid #bbb; display: flex; align-items: center; padding: 0 24px 0 12px; box-sizing: border-box; }
.ptri { width: 0; height: 0; border-left: 10px solid transparent; border-right: 10px solid transparent; border-top: 12px solid #aaa; margin-top: -3px; }
.ptext { margin-left: 16px; font-size: 26px; color: #222; }
.phead .dock { margin-left: auto; margin-top: -2px; }
.optbody { padding: 19px 21px 0 20px; flex: 1; }
.opttitle { display: flex; align-items: center; gap: 10px; height: 48px; }
.opttitle b { font-size: 26px; font-weight: 700; }
.optgrid { margin-top: 20px; display: grid; grid-template-columns: 250px 429px; grid-template-rows: 46px 45px 34px; row-gap: 10px; align-items: center; }
.psel { height: 45px; border: 2px solid #808080; border-radius: 8px; background: #f5f5f5; display: flex; align-items: center; justify-content: space-between; padding: 0 12px 0 8px; }
.psel .tri { border-top-width: 14px; }
.chk { display: block; width: 28px; height: 28px; background: #fff; border: 2px solid #666; box-sizing: border-box; }
.adv { display: flex; align-items: center; margin-top: 10px; height: 40px; padding-left: 7px; }
.adv b { margin-left: 11px; font-weight: 700; }
.rtri { width: 0; height: 0; border-top: 8px solid transparent; border-bottom: 8px solid transparent; border-left: 8px solid #666; }
.learn { display: block; margin-top: 14px; color: #0e64c8; font-weight: 700; text-decoration: underline; line-height: 32px; }

.resbody { height: 642px; flex: none; display: flex; overflow: hidden; background: #f0f0f0; }
.rescontent { width: 688px; flex: none; padding-left: 20px; }
h4 { margin: 0; font-size: 24px; font-weight: 700; line-height: 32px; color: #222; white-space: nowrap; }
.clip { margin-top: -12px; }
.formula { margin: 2px 0 0; line-height: 32px; color: #222; }
.h2 { margin-top: 21px; }
.h3 { margin-top: 32px; }
.rt { margin-top: 1px; width: 646px; display: grid; border-top: 2px solid #808080; border-left: 2px solid #808080; border-right: 2px solid #808080; box-sizing: border-box; }
.coef { grid-template-columns: 79px 188px 188px 187px; grid-template-rows: 52px 46px 50px; }
.gof { margin-top: 10px; grid-template-columns: 113px 529px; grid-template-rows: 53px 46px 46px 47px 46px 50px; }
.rc { border-right: 2px solid #808080; border-bottom: 2px solid #808080; display: flex; align-items: center; padding: 0 7px 2px; white-space: nowrap; }
.rc.last { border-right: none; }
.rc.hd { background: #f5f5f5; font-weight: 700; color: #222; }
.rc.val { background: #fff; justify-content: flex-end; }
.coef .rc:nth-last-child(-n+4), .gof .rc:nth-last-child(-n+2) { border-bottom-width: 4px; }
.resscroll { width: 30px; flex: none; display: flex; flex-direction: column; align-items: center; }
.resscroll .up { margin-top: 14px; }
.resscroll .thumb { margin-top: 87px; height: 496px; width: 30px; flex: none; background: #bdbdbd; }
.resscroll .down { margin-top: 11px; }
.up { display: block; flex: none; width: 0; height: 0; border-left: 8px solid transparent; border-right: 8px solid transparent; border-bottom: 9px solid #666; }
.down { display: block; flex: none; width: 0; height: 0; border-left: 8px solid transparent; border-right: 8px solid transparent; border-top: 9px solid #666; }
.resscroll .down { border-top-color: #999; }
.resfoot { flex: 1; background: #e5e5e5; border-top: 2px solid #f4f4f4; display: flex; justify-content: flex-end; align-items: center; padding-right: 11px; position: relative; }
.wm { position: absolute; right: 16px; bottom: 6px; font-size: 12.5px; color: #9a9a9a; white-space: nowrap; }

.dialog { position: absolute; left: 1437px; top: 836px; width: 703px; height: 503px; background: #f0f0f0; border: 2px solid #b4b4b4; border-radius: 16px; box-sizing: border-box; box-shadow: 0 12px 64px rgba(0, 0, 0, .5); overflow: hidden; display: flex; flex-direction: column; }
.dlgtitle { height: 56px; flex: none; background: #f0f4fa; display: flex; align-items: center; padding-left: 13px; gap: 6px; }
.dlgtitle > svg { flex: none; margin-left: -1px; }
.dlgtitle > span { padding-bottom: 4px; }
.dlgctl { margin-left: auto; display: flex; align-items: center; gap: 71px; margin-right: 36px; }
.dlgbody { flex: 1; display: flex; }
.dlgform { width: 636px; flex: none; padding: 30px 0 0 29px; }
.dlggrid { display: grid; grid-template-columns: 140px 223px; grid-auto-rows: 46px; row-gap: 19.5px; align-items: center; }
.dinput { height: 46px; background: #fff; border: 2px solid #808080; padding-left: 8px; display: flex; align-items: center; white-space: nowrap; }
.dsel { height: 46px; background: #fff; border: 2px solid #808080; border-radius: 0 10px 10px 0; padding-left: 8px; display: flex; align-items: center; justify-content: space-between; overflow: hidden; }
.dbtn { width: 46px; height: 100%; flex: none; background: #f5f5f5; border-left: 2px solid #808080; display: flex; align-items: center; justify-content: center; }
.dlgbtns { margin-top: 50px; width: 605px; display: flex; justify-content: space-between; }
.dbutton { width: 159px; height: 46px; background: #f5f5f5; border: 2px solid #808080; border-radius: 10px; font: inherit; color: #222; padding: 0 0 3px; }
.dlgscroll { width: 30px; margin-left: 33px; flex: none; display: flex; flex-direction: column; align-items: center; }
.dlgscroll .up { margin-top: 13px; border-bottom-color: #aaa; }
.dlgscroll .thumb { margin-top: 11px; height: 369px; width: 30px; flex: none; background: #bdbdbd; }
.dlgscroll .down { margin-top: 19px; }
</style>
